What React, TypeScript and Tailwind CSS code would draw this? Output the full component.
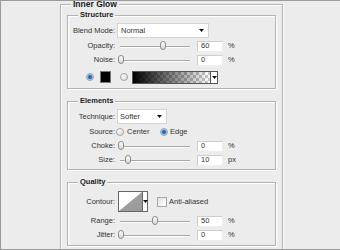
import React from 'react';

const Arrow = () => (
  <svg width="5" height="3" viewBox="0 0 5 3" className="shrink-0">
    <path d="M0 0H5L2.5 3Z" fill="#111" />
  </svg>
);

function Label({ text }: { text: string }) {
  return <span className="w-[47px] shrink-0 text-right">{text}</span>;
}

function Slider({ pos }: { pos: number }) {
  return (
    <div className="relative w-[75px] h-full shrink-0">
      <div className="absolute left-[3px] right-[2px] top-[7px] h-px bg-[#a8a8a8] shadow-[0_1px_0_#fff]" />
      <div
        className="absolute top-[2px] w-[6px] h-[9px] rounded-[3px] border border-[#8c8c8c] bg-linear-to-b from-white to-[#d6d6d6]"
        style={{ left: pos }}
      />
    </div>
  );
}

function NumBox({ value }: { value: string }) {
  return (
    <div className="ml-[5px] w-[26px] h-[11px] shrink-0 bg-white border border-t-[#cdcdcd] border-l-[#cdcdcd] border-r-[#eeeeee] border-b-[#eeeeee] pl-[3px] flex items-center">
      {value}
    </div>
  );
}

function SliderRow({ label, value, unit, pos }: { label: string; value: string; unit: string; pos: number }) {
  return (
    <div className="flex items-center h-[14px]">
      <Label text={label} />
      <div className="ml-[2px] h-full">
        <Slider pos={pos} />
      </div>
      <NumBox value={value} />
      <span className="ml-[5px]">{unit}</span>
    </div>
  );
}

function Radio({ on }: { on?: boolean }) {
  return (
    <span className="w-[8px] h-[8px] shrink-0 rounded-full border border-[#9aa3ad] bg-linear-to-br from-white to-[#dcdcdc] flex items-center justify-center">
      {on && <span className="w-[4px] h-[4px] rounded-full bg-[#2f6aa8] shadow-[0_0_0_1px_#8fb4da]" />}
    </span>
  );
}

function Section({ title, children, className }: { title: string; children: React.ReactNode; className?: string }) {
  return (
    <fieldset className={`ml-[6px] w-[209px] border border-[#b2b2b2] shadow-[inset_1px_1px_0_#fff,1px_1px_0_#fff] ${className ?? ''}`}>
      <legend className="ml-[10px] px-[2px] font-bold text-[7.5px] leading-[8px] text-[#1c1c1c] bg-[#ececec]">{title}</legend>
      {children}
    </fieldset>
  );
}

export default function App() {
  return (
    <div className="w-[340px] h-[250px] overflow-hidden bg-[#ececec] border-t border-l border-b border-[#9c9c9c] font-['Liberation_Sans',Arial,sans-serif] text-[7.5px] leading-none text-[#333]">
      <fieldset className="ml-[59px] -mt-px w-[223px] pb-[20px] border border-[#b2b2b2] shadow-[inset_1px_1px_0_#fff,1px_1px_0_#fff]">
        <legend className="ml-[10px] px-[2px] font-bold text-[8.5px] leading-[9px] text-[#1c1c1c] bg-[#ececec]">Inner Glow</legend>

        <Section title="Structure" className="mt-[2px] pt-[4px] pb-[4px]">
          <div className="flex items-center h-[15px]">
            <Label text="Blend Mode:" />
            <div className="ml-[2px] w-[92px] h-[15px] bg-white border border-[#d4d4d4] pl-[3px] pr-[4px] flex items-center justify-between">
              <span>Normal</span>
              <Arrow />
            </div>
          </div>
          <div className="mt-[1px]">
            <SliderRow label="Opacity:" value="60" unit="%" pos={43} />
            <SliderRow label="Noise:" value="0" unit="%" pos={1} />
          </div>
          <div className="mt-[3px] flex items-center h-[14px] pl-[18px]">
            <Radio on />
            <span className="ml-[6px] w-[11px] h-[12px] bg-black border border-[#777]" />
            <span className="ml-[9px]">
              <Radio />
            </span>
            <div className="ml-[4px] w-[86px] h-[13px] border border-[#555] flex">
              <div className="flex-1 [background-image:linear-gradient(to_right,#000,rgba(0,0,0,0)),repeating-conic-gradient(#c8c8c8_0_25%,#fff_0_50%)] [background-size:100%_100%,6px_6px]" />
              <div className="w-[7px] bg-white border-l border-[#555] flex items-center justify-center">
                <Arrow />
              </div>
            </div>
          </div>
        </Section>

        <Section title="Elements" className="mt-[8px] pt-[4px] pb-[2px]">
          <div className="flex items-center h-[15px]">
            <Label text="Technique:" />
            <div className="ml-[2px] w-[50px] h-[15px] bg-white border border-[#d4d4d4] pl-[2px] pr-[4px] flex items-center justify-between">
              <span>Softer</span>
              <Arrow />
            </div>
          </div>
          <div className="mt-[1px] flex items-center h-[14px]">
            <Label text="Source:" />
            <span className="ml-[1px]">
              <Radio />
            </span>
            <span className="ml-[3px] w-[33px]">Center</span>
            <Radio on />
            <span className="ml-[2px]">Edge</span>
          </div>
          <SliderRow label="Choke:" value="0" unit="%" pos={1} />
          <SliderRow label="Size:" value="10" unit="px" pos={8} />
        </Section>

        <Section title="Quality" className="mt-[8px] pt-[5px] pb-[3px]">
          <div className="flex items-center h-[21px]">
            <Label text="Contour:" />
            <div className="ml-[3px] w-[30px] h-[21px] border border-[#666] bg-white flex">
              <svg width="23" height="19" viewBox="0 0 23 19" className="shrink-0">
                <path d="M0 19L23 0V19Z" fill="#9c9c9c" />
              </svg>
              <div className="flex-1 border-l border-[#666] flex items-center justify-center">
                <Arrow />
              </div>
            </div>
            <span className="ml-[9px] w-[10px] h-[10px] border border-[#a8a8a8] bg-linear-to-br from-[#e2e2e2] to-white" />
            <span className="ml-[2px]">Anti-aliased</span>
          </div>
          <div className="mt-[2px]">
            <SliderRow label="Range:" value="50" unit="%" pos={35} />
            <SliderRow label="Jitter:" value="0" unit="%" pos={1} />
          </div>
        </Section>
      </fieldset>
    </div>
  );
}
